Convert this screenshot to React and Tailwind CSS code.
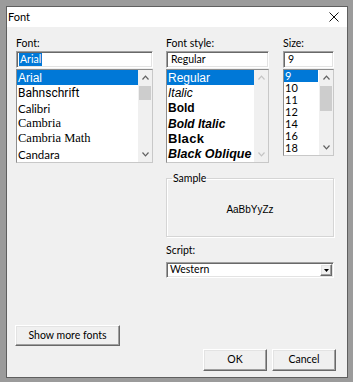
import React from "react";

const ui = "font-['Lato',sans-serif] text-[10.5px] text-black";
const sunken =
  "border border-t-[#a0a0a0] border-l-[#a0a0a0] border-r-white border-b-white shadow-[inset_1px_1px_#696969,inset_-1px_-1px_#e3e3e3]";
const raised =
  "border border-t-white border-l-white border-r-[#696969] border-b-[#696969] shadow-[inset_-1px_-1px_#a0a0a0,inset_1px_1px_#e3e3e3] bg-[#f0f0f0]";

function Chevron({ up, light }) {
  return (
    <svg width="7" height="5" viewBox="0 0 7 5" className="block">
      <polyline
        points={up ? "0.5,4.5 3.5,1.2 6.5,4.5" : "0.5,0.5 3.5,3.8 6.5,0.5"}
        fill="none"
        stroke={light ? "#c4c4c4" : "#606060"}
        strokeWidth="1.2"
      />
    </svg>
  );
}

function ScrollBar({ thumbTop, thumbH, disabled }) {
  return (
    <div className="relative flex h-full w-[14px] shrink-0 flex-col items-center justify-between bg-[#f0f0f0] py-[5px]">
      <Chevron up light={disabled} />
      {!disabled && (
        <div
          className="absolute left-[1px] right-[1px] bg-[#cdcdcd]"
          style={{ top: thumbTop, height: thumbH }}
        />
      )}
      <Chevron light={disabled} />
    </div>
  );
}

function ListBox({ rows, rowH, height, thumbTop, thumbH, disabled, selWidth }) {
  return (
    <div
      className="mt-[1px] flex border border-[#8e8e8e] border-b-[#c8c8c8] border-r-[#c8c8c8] bg-white"
      style={{ height }}
    >
      <div className="min-w-0 flex-1 overflow-hidden">
        {rows.map((r) => (
          <div
            key={r.t}
            className={`flex items-center whitespace-nowrap pl-[1px] ${r.c} ${r.sel ? "bg-[#0078d7] text-white" : "text-black"}`}
            style={{ height: rowH, width: r.sel && selWidth ? selWidth : undefined }}
          >
            {r.t}
          </div>
        ))}
      </div>
      <ScrollBar thumbTop={thumbTop} thumbH={thumbH} disabled={disabled} />
    </div>
  );
}

function TextBox({ children }) {
  return (
    <div className={`flex h-[17px] items-center bg-white pl-[4px] ${sunken}`}>{children}</div>
  );
}

function Button({ children, className = "" }) {
  return (
    <button className={`flex items-center justify-center ${raised} ${ui} ${className}`}>{children}</button>
  );
}

const fontRows = [
  { t: "Arial", c: "font-['Liberation_Sans',sans-serif] text-[12px]", sel: true },
  { t: "Bahnschrift", c: "font-['Roboto',sans-serif] text-[12px]" },
  { t: "Calibri", c: "font-['Lato',sans-serif] text-[11.5px]" },
  { t: "Cambria", c: "font-['Liberation_Serif',serif] text-[12.5px]" },
  { t: "Cambria Math", c: "font-['Liberation_Serif',serif] text-[12.5px]" },
  { t: "Candara", c: "font-['Lato',sans-serif] text-[11.5px]" },
];

const arial = "font-['Liberation_Sans',sans-serif]";
const styleRows = [
  { t: "Regular", c: `${arial} text-[12px]`, sel: true },
  { t: "Italic", c: `${arial} text-[12px] italic` },
  { t: "Bold", c: `${arial} text-[12px] font-bold` },
  { t: "Bold Italic", c: `${arial} text-[12px] font-bold italic` },
  { t: "Black", c: `${arial} text-[13px] font-bold tracking-[0.3px]` },
  { t: "Black Oblique", c: `${arial} text-[12.5px] font-bold italic` },
];

const sizeRows = ["9", "10", "11", "12", "14", "16", "18"].map((t, i) => ({
  t,
  c: "font-['Lato',sans-serif] text-[11px]",
  sel: i === 0,
}));

export default function App() {
  return (
    <div className="h-[382px] w-[353px] overflow-hidden bg-[#9b9b9b] pl-[6px] pt-[6px]">
      <div className={`flex h-[372px] w-[342px] flex-col border border-[#5f5f5f] bg-[#f0f0f0] ${ui}`}>
        <div className="flex h-[20px] shrink-0 items-center justify-between bg-white pl-[1px] pr-[8px]">
          <span className="font-['Lato',sans-serif] text-[11px]">Font</span>
          <svg width="10" height="10" viewBox="0 0 10 10">
            <path d="M0.5 0.5 L9.5 9.5 M9.5 0.5 L0.5 9.5" stroke="#111" strokeWidth="1" />
          </svg>
        </div>

        <div className="flex flex-col pl-[9px] pt-[9px]">
          <div className="flex">
            <div className="w-[137px]">
              <div className="flex h-[15px] items-center">Font:</div>
              <div className={`flex h-[17px] items-center bg-white pl-[2px] ${sunken}`}>
                <span className="bg-[#0078d7] px-[1px] leading-[13px] text-white">Arial</span>
              </div>
              <ListBox rows={fontRows} rowH={15.3} height={94} thumbTop={16} thumbH={14} />
            </div>
            <div className="ml-[13px] w-[103px]">
              <div className="flex h-[15px] items-center">Font style:</div>
              <TextBox>Regular</TextBox>
              <ListBox rows={styleRows} rowH={15.3} height={94} disabled />
            </div>
            <div className="ml-[14px] w-[51px]">
              <div className="flex h-[15px] items-center">Size:</div>
              <TextBox>9</TextBox>
              <ListBox rows={sizeRows} rowH={12} height={87} thumbTop={16} thumbH={25} selWidth={34} />
            </div>
          </div>

          <div className="flex">
            <div className="w-[150px] shrink-0" />
            <div className="w-[168px]">
              <fieldset className="mt-[8px] h-[66px] border border-[#d5d5d5] shadow-[1px_1px_#ffffff,inset_1px_1px_#ffffff]">
                <legend className="ml-[5px] px-[1px] leading-[14px]">Sample</legend>
                <div className="flex h-[48px] items-center justify-center font-['Liberation_Sans',sans-serif] text-[10px]">
                  AaBbYyZz
                </div>
              </fieldset>
              <div className="mt-[7px] flex h-[14px] items-center">Script:</div>
              <div className={`mt-[4px] flex h-[16px] items-center justify-between bg-white pl-[3px] pr-[1px] ${sunken}`}>
                <span>Western</span>
                <div className={`flex h-[12px] w-[12px] items-center justify-center ${raised}`}>
                  <svg width="5" height="3" viewBox="0 0 5 3">
                    <path d="M0 0 H5 L2.5 3 Z" fill="#000" />
                  </svg>
                </div>
              </div>
            </div>
          </div>

          <Button className="-ml-px mt-[47px] h-[21px] w-[105px]">Show more fonts</Button>

          <div className="mt-[3px] flex justify-end gap-[5px] pr-[11px]">
            <Button className="h-[22px] w-[64px]">OK</Button>
            <Button className="h-[22px] w-[64px]">Cancel</Button>
          </div>
        </div>
      </div>
    </div>
  );
}
